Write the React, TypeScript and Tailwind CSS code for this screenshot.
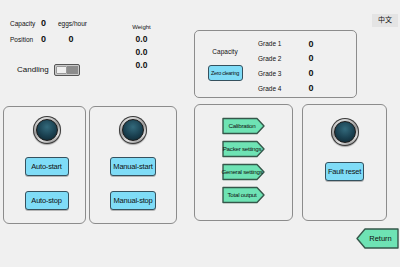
import React from "react";

const font = { fontFamily: '"Liberation Sans", Arial, "Noto Sans CJK SC", sans-serif' };

function Light() {
  return (
    <div className="w-[28px] h-[28px] rounded-full p-[1px] bg-[#3a3a3a] shadow-[0_1px_1px_rgba(0,0,0,0.3)]">
      <div className="w-full h-full rounded-full p-[2px] bg-[linear-gradient(160deg,#f4f4f4,#9a9a9a_45%,#e0e0e0_75%,#6c6c6c)]">
        <div className="w-full h-full rounded-full border border-[#1a1a1a] bg-[radial-gradient(circle_at_50%_35%,#336a7c,#1a4050_55%,#0e222a)]" />
      </div>
    </div>
  );
}

function CyanButton({ label, w }: { label: string; w: string }) {
  return (
    <div
      className={`${w} h-[19px] rounded-[3px] border-[1.5px] border-[#35515e] bg-[#7fdcf7] flex items-center justify-center text-[7.5px] whitespace-nowrap tracking-[-0.2px] text-[#111] shadow-[0_1px_0_rgba(0,0,0,0.25)]`}
    >
      {label}
    </div>
  );
}

function ArrowButton({ label }: { label: string }) {
  return (
    <div className="relative w-[43px] h-[18px] flex items-center justify-center">
      <svg className="absolute inset-0" width="43" height="18" viewBox="0 0 43 18">
        <polygon
          points="1,1.5 35,1.5 42,9 35,16.5 1,16.5"
          fill="#6ee3b4"
          stroke="#35574a"
          strokeWidth="1.4"
          strokeLinejoin="round"
        />
      </svg>
      <span className="relative text-[6.2px] text-[#111] pr-[3px] whitespace-nowrap tracking-[-0.25px]">{label}</span>
    </div>
  );
}

export default function App() {
  return (
    <div className="w-[400px] h-[267px] bg-[#f0f0f0] overflow-hidden text-[#111]" style={font}>
      {/* top section */}
      <div className="flex h-[104px]">
        <div className="w-[194px] flex">
          <div className="w-[120px] pt-[16px] pl-[10px]">
            <div className="grid grid-cols-[31px_17px_26px] grid-rows-[16px_16px] items-center">
              <span className="text-[6.5px]">Capacity</span>
              <span className="text-[9px] font-semibold">0</span>
              <span className="text-[6.5px] text-center whitespace-nowrap">eggs/hour</span>
              <span className="text-[6.5px]">Position</span>
              <span className="text-[9px] font-semibold">0</span>
              <span className="text-[9px] font-semibold text-center">0</span>
            </div>
            <div className="mt-[16px] pl-[7px] h-[12px] flex items-center">
              <span className="text-[8px]">Candling</span>
              <div className="ml-[5px] w-[26px] h-[12px] border border-[#555] rounded-[2px] flex p-[1px] bg-[#c8c8c8]">
                <div className="w-1/2 h-full bg-[#efefef] border border-[#9a9a9a] rounded-[1px]" />
                <div className="w-1/2 h-full bg-[#8c8c8c]" />
              </div>
            </div>
          </div>
          <div className="w-[43px] pt-[21px] flex flex-col items-center">
            <div className="h-[12px] flex items-center text-[6px]">Weight</div>
            <div className="h-[13px] flex items-center text-[8.5px] font-semibold">0.0</div>
            <div className="h-[13px] flex items-center text-[8.5px] font-semibold">0.0</div>
            <div className="h-[13px] flex items-center text-[8.5px] font-semibold">0.0</div>
          </div>
        </div>

        <div className="mt-[30px] w-[163px] h-[68px] border border-[#8c8c8c] rounded-[5px] flex">
          <div className="w-[60px] flex flex-col items-center">
            <div className="mt-[16px] h-[10px] flex items-center text-[6.5px]">Capacity</div>
            <div className="mt-[8px] w-[35px] h-[16px] rounded-[3px] border-[1.5px] border-[#35515e] bg-[#7fdcf7] flex items-center justify-center text-[5.5px] whitespace-nowrap tracking-[-0.3px]">
              Zero clearing
            </div>
          </div>
          <div className="ml-[3px] pt-[6px] grid grid-cols-[46px_14px] auto-rows-[14.7px] items-center">
            <span className="text-[6.5px]">Grade 1</span>
            <span className="text-[9px] font-semibold text-center">0</span>
            <span className="text-[6.5px]">Grade 2</span>
            <span className="text-[9px] font-semibold text-center">0</span>
            <span className="text-[6.5px]">Grade 3</span>
            <span className="text-[9px] font-semibold text-center">0</span>
            <span className="text-[6.5px]">Grade 4</span>
            <span className="text-[9px] font-semibold text-center">0</span>
          </div>
        </div>

        <div className="ml-[15px] mt-[14px] w-[26px] h-[13px] bg-[#e4e4e4] flex items-center justify-center text-[7px]">
          中文
        </div>
      </div>

      {/* bottom panels */}
      <div className="flex items-start">
        <div className="ml-[3px] mt-[2px] w-[83px] h-[118px] border-[1.5px] border-[#8c8c8c] rounded-[6px] flex flex-col items-center pl-[4px] pt-[9px]">
          <Light />
          <div className="mt-[13px]">
            <CyanButton label="Auto-start" w="w-[44px]" />
          </div>
          <div className="mt-[15px]">
            <CyanButton label="Auto-stop" w="w-[44px]" />
          </div>
        </div>
        <div className="ml-[3px] mt-[2px] w-[88px] h-[118px] border-[1.5px] border-[#8c8c8c] rounded-[6px] flex flex-col items-center pt-[9px]">
          <Light />
          <div className="mt-[13px]">
            <CyanButton label="Manual-start" w="w-[46px]" />
          </div>
          <div className="mt-[15px]">
            <CyanButton label="Manual-stop" w="w-[46px]" />
          </div>
        </div>
        <div className="ml-[17px] w-[99px] h-[117px] border-[1.5px] border-[#8c8c8c] rounded-[6px] flex flex-col items-center pt-[12px] gap-[5px]">
          <ArrowButton label="Calibration" />
          <ArrowButton label="Packer settings" />
          <ArrowButton label="General settings" />
          <ArrowButton label="Total output" />
        </div>
        <div className="ml-[9px] w-[85px] h-[117px] border-[1.5px] border-[#8c8c8c] rounded-[6px] flex flex-col items-center pt-[13px]">
          <Light />
          <div className="mt-[16px]">
            <CyanButton label="Fault reset" w="w-[39px]" />
          </div>
        </div>
      </div>

      {/* return */}
      <div className="flex justify-end pr-[1px] mt-[4px]">
        <div className="relative w-[43px] h-[21px] flex items-center justify-center">
          <svg className="absolute inset-0" width="43" height="21" viewBox="0 0 43 21">
            <polygon
              points="1,10.5 9,1 42,1 42,20 9,20"
              fill="#6ee3b4"
              stroke="#35574a"
              strokeWidth="1.4"
              strokeLinejoin="round"
            />
          </svg>
          <span className="relative text-[7.5px] pl-[6px]">Return</span>
        </div>
      </div>
    </div>
  );
}
